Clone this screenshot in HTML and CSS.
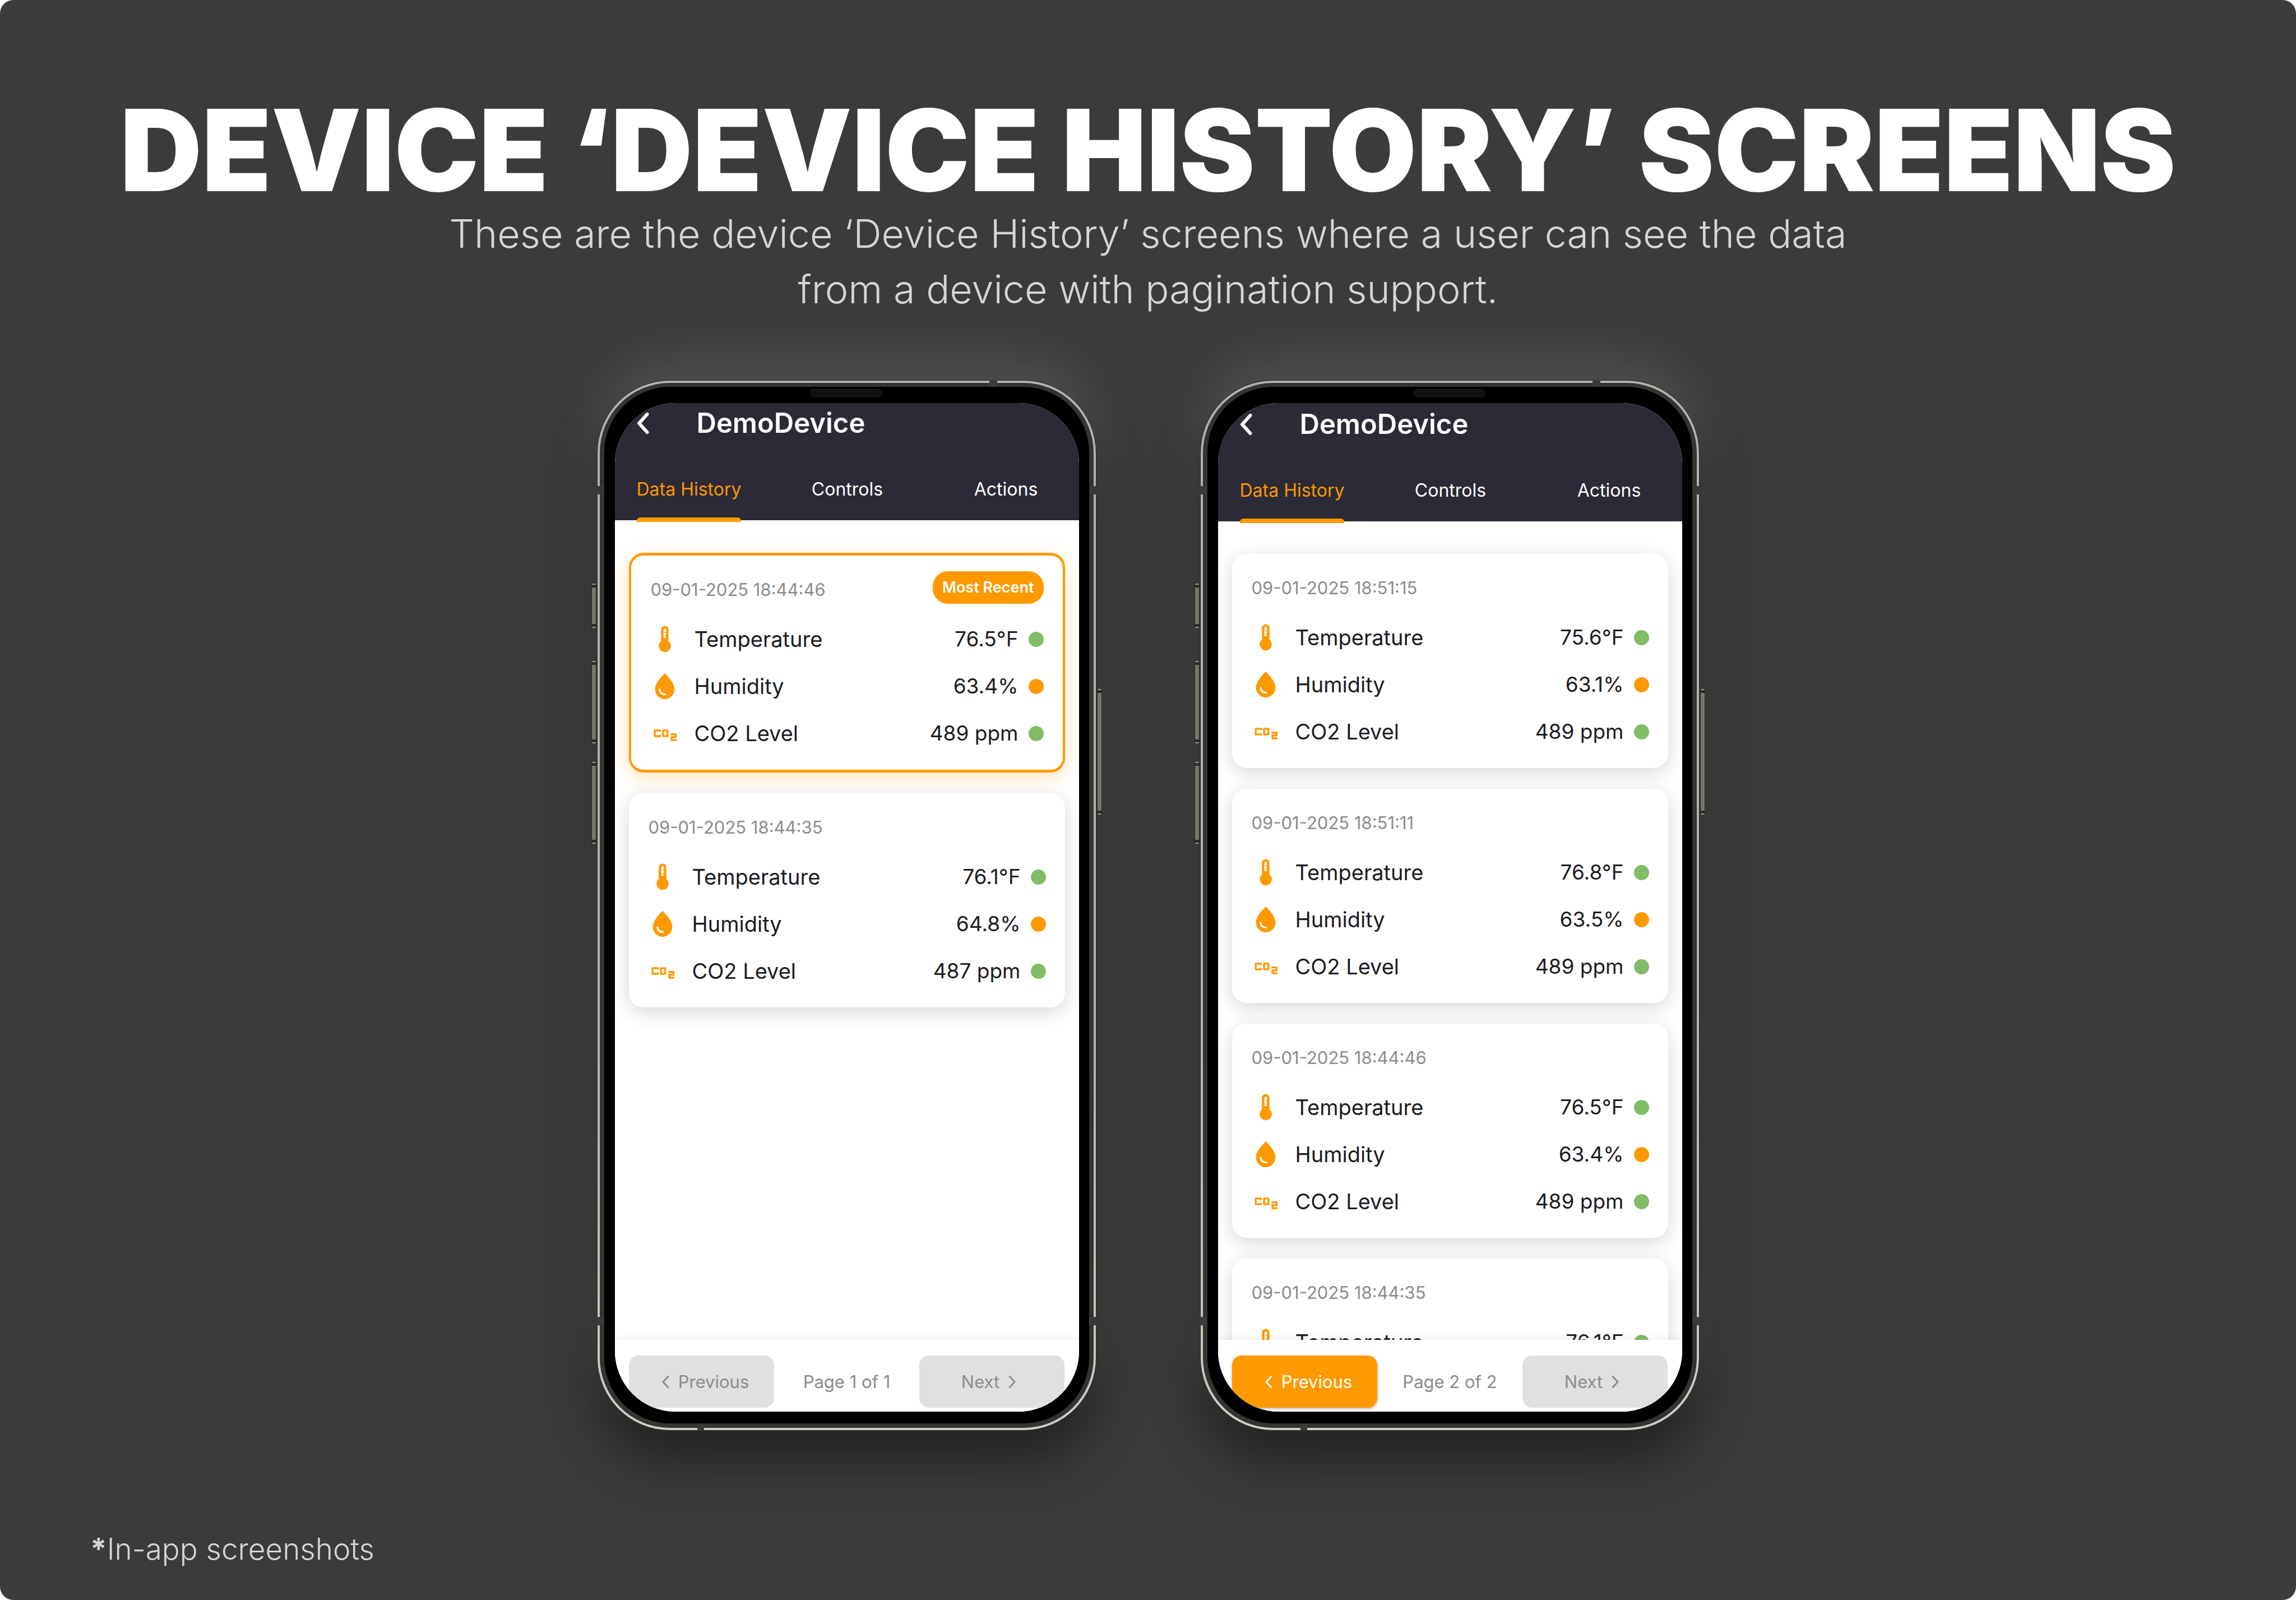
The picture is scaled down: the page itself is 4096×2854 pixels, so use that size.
FILE: index.html
```html
<!DOCTYPE html>
<html lang="en">
<head>
<meta charset="utf-8">
<meta name="viewport" content="width=device-width, initial-scale=1">
<title>Device History screens</title>
<link rel="stylesheet" href="styles.css">
</head>
<body>
<svg class="sprite" aria-hidden="true">
  <symbol id="icon-temperature" viewBox="0 0 50 56">
    <path fill="currentColor" fill-rule="evenodd" d="M18.3 11.2a6.7 6.7 0 0 1 13.4 0V32a10.8 10.8 0 1 1-13.4 0ZM22.8 11.2V26h4.6v-2.6H25v-2h2.4v-4.2H25v-2h2.4v-4a2.3 2.3 0 0 0-4.6 0Z"/>
  </symbol>
  <symbol id="icon-humidity" viewBox="0 0 50 56">
    <path fill="currentColor" d="M25 4.8C31 11.5 42.4 22.500 42.4 33.200A17.400 17.800 0 0 1 7.600 33.200C7.600 22.500 19 11.500 25 4.800Z"/>
    <path fill="none" stroke="#fff" stroke-width="3" stroke-linecap="round" d="M15.900 34C16.500 39.500 20 42.600 26 42.600"/>
  </symbol>
  <symbol id="icon-co2" viewBox="0 0 50 56">
    <g fill="none" stroke="currentColor" stroke-width="3.400" stroke-linejoin="round">
      <path d="M16.700 25.600V22.900H7.200V33.100H16.700V30.400"/>
      <path d="M22.100 22.900H29.800V33.100H22.100Z"/>
      <path d="M35.500 29.700H44.500V34.800H37V40H46"/>
    </g>
  </symbol>
  <symbol id="icon-back" viewBox="0 0 22 40">
    <path fill="none" stroke="currentColor" stroke-width="6" stroke-linecap="round" stroke-linejoin="round" d="M18.500 4 4 20 18.500 36"/>
  </symbol>
  <symbol id="icon-prev" viewBox="0 0 14 24">
    <path fill="none" stroke="currentColor" stroke-width="3" d="M12.500 1.500 3 12 12.500 22.500"/>
  </symbol>
  <symbol id="icon-next" viewBox="0 0 14 24">
    <path fill="none" stroke="currentColor" stroke-width="3" d="M1.500 1.500 11 12 1.500 22.500"/>
  </symbol>
</svg>

<main class="stage">
  <header class="intro">
    <h1 class="intro__title">DEVICE ‘DEVICE HISTORY’ SCREENS</h1>
    <p class="intro__text">These are the device ‘Device History’ screens where a user can see the data from a device with pagination support.</p>
  </header>

  <div class="phones">
    <section class="phone" aria-label="Page 1 of 1">
      <span class="side side--mute"></span><span class="side side--up"></span><span class="side side--down"></span><span class="side side--power"></span>
      <div class="phone__rim">
        <div class="phone__bezel">
          <span class="phone__speaker"></span>
          <div class="screen">
            <header class="appbar">
              <div class="appbar__top">
                <button class="appbar__back" type="button" aria-label="Back"><svg width="22" height="40"><use href="#icon-back"/></svg></button>
                <h2 class="appbar__title">DemoDevice</h2>
              </div>
              <nav class="tabs">
                <a class="tab tab--active" href="#history">Data History</a>
                <a class="tab" href="#controls">Controls</a>
                <a class="tab" href="#actions">Actions</a>
              </nav>
            </header>
            <div class="list">
              <article class="card card--recent">
                <time class="card__time">09-01-2025 18:44:46</time>
                <span class="card__badge">Most Recent</span>
                <ul class="readings">
                  <li class="reading"><svg class="reading__icon"><use href="#icon-temperature"/></svg><span class="reading__name">Temperature</span><span>76.5°F</span><i class="dot dot--ok"></i></li>
                  <li class="reading"><svg class="reading__icon"><use href="#icon-humidity"/></svg><span class="reading__name">Humidity</span><span>63.4%</span><i class="dot dot--warn"></i></li>
                  <li class="reading"><svg class="reading__icon"><use href="#icon-co2"/></svg><span class="reading__name">CO2 Level</span><span>489 ppm</span><i class="dot dot--ok"></i></li>
                </ul>
              </article>
              <article class="card">
                <time class="card__time">09-01-2025 18:44:35</time>
                <ul class="readings">
                  <li class="reading"><svg class="reading__icon"><use href="#icon-temperature"/></svg><span class="reading__name">Temperature</span><span>76.1°F</span><i class="dot dot--ok"></i></li>
                  <li class="reading"><svg class="reading__icon"><use href="#icon-humidity"/></svg><span class="reading__name">Humidity</span><span>64.8%</span><i class="dot dot--warn"></i></li>
                  <li class="reading"><svg class="reading__icon"><use href="#icon-co2"/></svg><span class="reading__name">CO2 Level</span><span>487 ppm</span><i class="dot dot--ok"></i></li>
                </ul>
              </article>
            </div>
            <footer class="pager">
              <button class="pager__button pager__button--prev" type="button" disabled><svg width="14" height="24"><use href="#icon-prev"/></svg>Previous</button>
              <span class="pager__status">Page 1 of 1</span>
              <button class="pager__button pager__button--next" type="button" disabled>Next<svg width="14" height="24"><use href="#icon-next"/></svg></button>
            </footer>
          </div>
        </div>
      </div>
      <span class="band band--top"></span><span class="band band--bottom"></span>
      <span class="band band--left band--high"></span><span class="band band--right band--high"></span>
      <span class="band band--left band--low"></span><span class="band band--right band--low"></span>
    </section>

    <section class="phone" aria-label="Page 2 of 2">
      <span class="side side--mute"></span><span class="side side--up"></span><span class="side side--down"></span><span class="side side--power"></span>
      <div class="phone__rim">
        <div class="phone__bezel">
          <span class="phone__speaker"></span>
          <div class="screen">
            <header class="appbar appbar--low">
              <div class="appbar__top">
                <button class="appbar__back" type="button" aria-label="Back"><svg width="22" height="40"><use href="#icon-back"/></svg></button>
                <h2 class="appbar__title">DemoDevice</h2>
              </div>
              <nav class="tabs">
                <a class="tab tab--active" href="#history">Data History</a>
                <a class="tab" href="#controls">Controls</a>
                <a class="tab" href="#actions">Actions</a>
              </nav>
            </header>
            <div class="list">
              <article class="card">
                <time class="card__time">09-01-2025 18:51:15</time>
                <ul class="readings">
                  <li class="reading"><svg class="reading__icon"><use href="#icon-temperature"/></svg><span class="reading__name">Temperature</span><span>75.6°F</span><i class="dot dot--ok"></i></li>
                  <li class="reading"><svg class="reading__icon"><use href="#icon-humidity"/></svg><span class="reading__name">Humidity</span><span>63.1%</span><i class="dot dot--warn"></i></li>
                  <li class="reading"><svg class="reading__icon"><use href="#icon-co2"/></svg><span class="reading__name">CO2 Level</span><span>489 ppm</span><i class="dot dot--ok"></i></li>
                </ul>
              </article>
              <article class="card">
                <time class="card__time">09-01-2025 18:51:11</time>
                <ul class="readings">
                  <li class="reading"><svg class="reading__icon"><use href="#icon-temperature"/></svg><span class="reading__name">Temperature</span><span>76.8°F</span><i class="dot dot--ok"></i></li>
                  <li class="reading"><svg class="reading__icon"><use href="#icon-humidity"/></svg><span class="reading__name">Humidity</span><span>63.5%</span><i class="dot dot--warn"></i></li>
                  <li class="reading"><svg class="reading__icon"><use href="#icon-co2"/></svg><span class="reading__name">CO2 Level</span><span>489 ppm</span><i class="dot dot--ok"></i></li>
                </ul>
              </article>
              <article class="card">
                <time class="card__time">09-01-2025 18:44:46</time>
                <ul class="readings">
                  <li class="reading"><svg class="reading__icon"><use href="#icon-temperature"/></svg><span class="reading__name">Temperature</span><span>76.5°F</span><i class="dot dot--ok"></i></li>
                  <li class="reading"><svg class="reading__icon"><use href="#icon-humidity"/></svg><span class="reading__name">Humidity</span><span>63.4%</span><i class="dot dot--warn"></i></li>
                  <li class="reading"><svg class="reading__icon"><use href="#icon-co2"/></svg><span class="reading__name">CO2 Level</span><span>489 ppm</span><i class="dot dot--ok"></i></li>
                </ul>
              </article>
              <article class="card">
                <time class="card__time">09-01-2025 18:44:35</time>
                <ul class="readings">
                  <li class="reading"><svg class="reading__icon"><use href="#icon-temperature"/></svg><span class="reading__name">Temperature</span><span>76.1°F</span><i class="dot dot--ok"></i></li>
                </ul>
              </article>
            </div>
            <footer class="pager">
              <button class="pager__button pager__button--prev pager__button--on" type="button"><svg width="14" height="24"><use href="#icon-prev"/></svg>Previous</button>
              <span class="pager__status">Page 2 of 2</span>
              <button class="pager__button pager__button--next" type="button" disabled>Next<svg width="14" height="24"><use href="#icon-next"/></svg></button>
            </footer>
          </div>
        </div>
      </div>
      <span class="band band--top"></span><span class="band band--bottom"></span>
      <span class="band band--left band--high"></span><span class="band band--right band--high"></span>
      <span class="band band--left band--low"></span><span class="band band--right band--low"></span>
    </section>
  </div>

  <p class="footnote"><b>*</b>In-app screenshots</p>
</main>
</body>
</html>
```

FILE: styles.css
```css
:root {
  --accent: #ff9900;
  --ok: #80bd66;
  --navy: #2b2a36;
  --ink: #1c1b1f;
  --muted: #8b8b8b;
  --backdrop: #3b3b3b;
}

* { box-sizing: border-box; }

body {
  margin: 0;
  background: #fff;
  font-family: Inter, "Liberation Sans", sans-serif;
}

h1, h2, p, ul { margin: 0; padding: 0; }
ul { list-style: none; }
svg { display: block; flex: none; }

.sprite { position: absolute; width: 0; height: 0; }

.stage {
  display: flex;
  flex-direction: column;
  min-height: 100vh;
  padding: 169px 161px 59px;
  border-radius: 24px;
  background: var(--backdrop);
  overflow: hidden;
}

/* Heading */
.intro {
  display: flex;
  flex-direction: column;
  align-items: center;
  text-align: center;
}
.intro__title {
  color: #fff;
  font-size: 202px;
  font-weight: 900;
  line-height: 198px;
  white-space: nowrap;
}
.intro__text {
  max-width: 2600px;
  color: #d6d6d6;
  font-size: 70px;
  font-weight: 300;
  line-height: 99px;
}

/* Phones */
.phones {
  display: flex;
  justify-content: center;
  gap: 185px;
  margin-top: 113px;
}
.phone {
  position: relative;
  width: 891px;
  padding: 4px;
  border: 1px solid #262622;
  border-radius: 130px;
  background: linear-gradient(#b3b2af 60%, #cfcdc4);
  box-shadow: 0 -44px 80px rgba(255, 255, 255, .1), 0 54px 90px rgba(0, 0, 0, .42);
}
.phone__rim {
  padding: 7px 8px 8px;
  border-radius: 125px;
  background: #353431;
}
.phone__bezel {
  position: relative;
  padding: 29px 18px 21px 19px;
  border-radius: 117px;
  background: #000;
}
.phone__speaker {
  position: absolute;
  top: 4px;
  left: calc(50% - 65px);
  width: 129px;
  height: 14px;
  border: 1px solid #222;
  border-radius: 7px;
  background: #111;
}
.screen {
  display: flex;
  flex-direction: column;
  aspect-ratio: 828 / 1799;
  border-radius: 108px;
  background: #fff;
  overflow: hidden;
}

/* Hardware buttons on the sides of the frame */
.side {
  position: absolute;
  left: -11px;
  width: 9px;
  border: 1px solid #262622;
  border-width: 0 1px;
  border-radius: 3px;
  background: linear-gradient(#a5a499 2px, #2c2b24 2px 7px, #77766d 7px calc(100% - 7px), #2c2b24 calc(100% - 7px) calc(100% - 2px), #a5a499 calc(100% - 2px));
}
.side--mute { top: 362px; height: 79px; }
.side--up { top: 500px; height: 147px; }
.side--down { top: 680px; height: 146px; }
.side--power { top: 550px; left: auto; right: -11px; height: 224px; }

/* Antenna bands */
.band { position: absolute; background: #3a3a38; }
.band--top { top: -1px; right: 176px; width: 14px; height: 12px; }
.band--bottom { bottom: -1px; left: 178px; width: 12px; height: 13px; }
.band--left { left: -1px; width: 12px; height: 15px; }
.band--right { right: -1px; width: 12px; height: 15px; }
.band--high { top: 188px; }
.band--low { bottom: 187px; }

/* App header */
.appbar {
  position: relative;
  z-index: 1;
  flex: none;
  display: flex;
  flex-direction: column;
  justify-content: space-between;
  height: 209px;
  padding: 0 37px 0 39px;
  background: var(--navy);
  color: #fff;
}
.appbar--low { height: 211px; padding-top: 2px; }
.appbar__top {
  display: flex;
  align-items: center;
  gap: 85px;
}
.appbar__back {
  padding: 0;
  border: 0;
  background: none;
  color: inherit;
}
.appbar__title {
  font-size: 49px;
  font-weight: 600;
  line-height: 71px;
}
.tabs {
  display: flex;
  justify-content: space-between;
}
.tab {
  position: relative;
  width: 186px;
  color: inherit;
  font-size: 32px;
  line-height: 110px;
  text-align: center;
  text-decoration: none;
  white-space: nowrap;
}
.tab--active { color: var(--accent); }
.tab--active::after {
  content: "";
  position: absolute;
  left: 0;
  right: 0;
  bottom: -3px;
  height: 8px;
  border-radius: 6px 6px 0 0;
  background: var(--accent);
}

/* Reading cards */
.list {
  flex: 1;
  display: flex;
  flex-direction: column;
  gap: 37px;
  min-height: 0;
  padding: 58px 25px 0;
  overflow: hidden;
}
.card {
  position: relative;
  flex: none;
  padding: 36px 34px 37px 35px;
  border-radius: 26px;
  background: #fff;
  box-shadow: 0 8px 34px rgba(0, 0, 0, .16);
}
.card--recent {
  border: solid var(--accent);
  border-width: 5px 4px;
  box-shadow: 0 8px 34px rgba(255, 153, 0, .28);
}
.card__time {
  display: block;
  color: var(--muted);
  font-size: 31px;
  line-height: 50px;
}
.card__badge {
  position: absolute;
  top: 28px;
  right: 34px;
  padding: 0 17px;
  border-radius: 27px;
  background: var(--accent);
  color: #fff;
  font-size: 27px;
  font-weight: 600;
  line-height: 58px;
}
.readings {
  display: flex;
  flex-direction: column;
  gap: 28px;
  margin-top: 35px;
}
.reading {
  display: flex;
  align-items: center;
  color: var(--ink);
  font-size: 37px;
  line-height: 56px;
}
.reading__icon {
  width: 50px;
  height: 56px;
  color: var(--accent);
}
.reading__name { flex: 1; margin-left: 28px; font-size: 38px; }
.dot {
  width: 27px;
  height: 27px;
  margin-left: 18px;
  border-radius: 50%;
}
.dot--ok { background: var(--ok); }
.dot--warn { background: var(--accent); }

/* Pagination */
.pager {
  position: relative;
  flex: none;
  display: flex;
  align-items: center;
  justify-content: space-between;
  padding: 28px 25px 7px;
  background: #fff;
  box-shadow: 0 -4px 10px rgba(0, 0, 0, .06);
  color: var(--muted);
  font-size: 31px;
}
.pager__button {
  display: flex;
  align-items: center;
  justify-content: center;
  gap: 16px;
  width: 259px;
  height: 93px;
  padding: 0;
  border: 0;
  border-radius: 17px;
  background: #e0e0e0;
  color: var(--muted);
  font: inherit;
}
.pager__button--prev { padding-left: 14px; }
.pager__button--next { padding-right: 12px; }
.pager__button--on {
  background: var(--accent);
  box-shadow: 0 2px 5px rgba(0, 0, 0, .3);
  color: #fff;
}

.footnote {
  margin-top: auto;
  color: #d6d6d6;
  font-size: 53px;
  font-weight: 300;
  line-height: 64px;
}
.footnote b { font-weight: 700; }
```
